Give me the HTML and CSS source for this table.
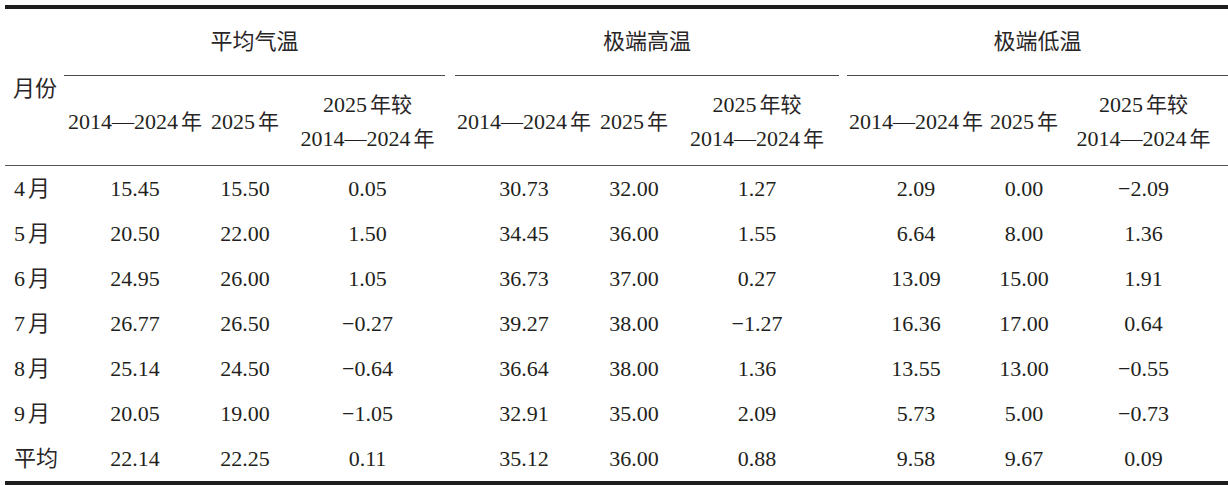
FILE: index.html
```html
<!DOCTYPE html>
<html>
<head>
<meta charset="utf-8">
<title>气温对比表</title>
<link rel="stylesheet" href="styles.css">
</head>
<body>
<table class="temp-table">
  <colgroup>
    <col class="c-month">
    <col class="c-a1"><col class="c-a2"><col class="c-a3">
    <col class="c-b1"><col class="c-b2"><col class="c-b3">
    <col class="c-c1"><col class="c-c2"><col class="c-c3">
  </colgroup>
  <thead>
    <tr class="row-group">
      <th class="month-head" rowspan="2"><span class="cjk">月份</span></th>
      <th class="group" colspan="3"><div class="group-label first"><span class="cjk">平均气温</span></div></th>
      <th class="group" colspan="3"><div class="group-label"><span class="cjk">极端高温</span></div></th>
      <th class="group" colspan="3"><div class="group-label last"><span class="cjk">极端低温</span></div></th>
    </tr>
    <tr class="row-sub">
      <th class="sub">2014—2024<span class="cjk yr">年</span></th>
      <th class="sub">2025<span class="cjk yr">年</span></th>
      <th class="sub">2025<span class="cjk yr">年较</span><br>2014—2024<span class="cjk yr">年</span></th>
      <th class="sub">2014—2024<span class="cjk yr">年</span></th>
      <th class="sub">2025<span class="cjk yr">年</span></th>
      <th class="sub">2025<span class="cjk yr">年较</span><br>2014—2024<span class="cjk yr">年</span></th>
      <th class="sub">2014—2024<span class="cjk yr">年</span></th>
      <th class="sub">2025<span class="cjk yr">年</span></th>
      <th class="sub">2025<span class="cjk yr">年较</span><br>2014—2024<span class="cjk yr">年</span></th>
    </tr>
  </thead>
  <tbody>
    <tr><td class="month">4<span class="cjk yr">月</span></td><td>15.45</td><td>15.50</td><td>0.05</td><td>30.73</td><td>32.00</td><td>1.27</td><td>2.09</td><td>0.00</td><td>−2.09</td></tr>
    <tr><td class="month">5<span class="cjk yr">月</span></td><td>20.50</td><td>22.00</td><td>1.50</td><td>34.45</td><td>36.00</td><td>1.55</td><td>6.64</td><td>8.00</td><td>1.36</td></tr>
    <tr><td class="month">6<span class="cjk yr">月</span></td><td>24.95</td><td>26.00</td><td>1.05</td><td>36.73</td><td>37.00</td><td>0.27</td><td>13.09</td><td>15.00</td><td>1.91</td></tr>
    <tr><td class="month">7<span class="cjk yr">月</span></td><td>26.77</td><td>26.50</td><td>−0.27</td><td>39.27</td><td>38.00</td><td>−1.27</td><td>16.36</td><td>17.00</td><td>0.64</td></tr>
    <tr><td class="month">8<span class="cjk yr">月</span></td><td>25.14</td><td>24.50</td><td>−0.64</td><td>36.64</td><td>38.00</td><td>1.36</td><td>13.55</td><td>13.00</td><td>−0.55</td></tr>
    <tr><td class="month">9<span class="cjk yr">月</span></td><td>20.05</td><td>19.00</td><td>−1.05</td><td>32.91</td><td>35.00</td><td>2.09</td><td>5.73</td><td>5.00</td><td>−0.73</td></tr>
    <tr><td class="month"><span class="cjk">平均</span></td><td>22.14</td><td>22.25</td><td>0.11</td><td>35.12</td><td>36.00</td><td>0.88</td><td>9.58</td><td>9.67</td><td>0.09</td></tr>
  </tbody>
</table>
</body>
</html>
```

FILE: styles.css
```css
html, body {
  margin: 0;
  padding: 0;
  background: #ffffff;
}

body {
  font-family: "Liberation Serif", "Times New Roman", serif;
  font-size: 22px;
  color: #231f20;
}

.cjk {
  font-family: "Noto Sans CJK SC", "Liberation Serif", sans-serif;
  font-size: 21px;
  line-height: 1;
  color: #2a2627;
}

.yr {
  margin-left: 3px;
}

.temp-table {
  margin: 5px 0 0 5px;
  width: 1223px;
  table-layout: fixed;
  border-collapse: separate;
  border-spacing: 0;
  border-top: 4px solid #1e1e1e;
  border-bottom: 4px solid #1e1e1e;
}

.c-month { width: 59px; }
.c-a1 { width: 142px; }
.c-a2 { width: 78px; }
.c-a3 { width: 167px; }
.c-b1 { width: 146px; }
.c-b2 { width: 74px; }
.c-b3 { width: 172px; }
.c-c1 { width: 146px; }
.c-c2 { width: 70px; }
.c-c3 { width: 169px; }

th, td {
  padding: 0;
  font-weight: 400;
  white-space: nowrap;
  text-align: center;
  vertical-align: middle;
}

.month-head {
  text-align: left;
  padding: 2px 0 0 8px;
  border-bottom: 1px solid #555555;
}

.month-head .cjk {
  font-size: 22px;
}

.group-label {
  height: 66px;
  line-height: 66px;
  margin: 0 4px;
  border-bottom: 1px solid #4a4a4a;
}

.group-label .cjk {
  font-size: 22px;
}

.group-label.first { margin-left: 0; margin-right: 6px; }
.group-label.last { margin-right: 0; }

.sub {
  height: 87px;
  line-height: 34px;
  border-bottom: 1px solid #555555;
  padding-top: 2px;
}

tbody td {
  height: 45px;
  line-height: 45px;
}

td.month {
  text-align: left;
  padding-left: 9px;
}

td.month .cjk {
  font-size: 22px;
}
```
